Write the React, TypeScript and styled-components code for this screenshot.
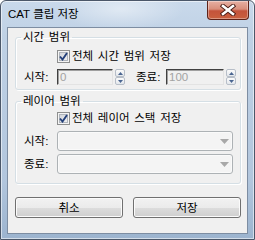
import React from 'react';
import styled, { createGlobalStyle } from 'styled-components';

// ── Global ────────────────────────────────────────────────

const GlobalStyle = createGlobalStyle`
  html, body {
    margin: 0;
    padding: 0;
    background: #ffffff;
  }
  body {
    font-family: "Liberation Sans", "Noto Sans CJK KR", sans-serif;
    font-size: 11.5px;
    color: #000;
  }
  * { box-sizing: border-box; }
`;

// ── Window frame ──────────────────────────────────────────

const Window = styled.div`
  width: 255px;
  height: 240px;
  display: flex;
  flex-direction: column;
  border: 1px solid #4b5769;
  border-radius: 6px 6px 0 0;
  background:
    radial-gradient(ellipse 90px 30px at 120px 8px, rgba(255, 255, 255, 0.45), rgba(255, 255, 255, 0) 70%),
    linear-gradient(180deg, #c9d9eb 0%, #bfd1e5 15%, #b2c6dd 75%, #9cb4cf 100%);
  box-shadow: inset 0 0 0 1px rgba(255, 255, 255, 0.55);
  overflow: hidden;
`;

const TitleBar = styled.div`
  height: 26px;
  flex: none;
  display: flex;
  align-items: flex-start;
  justify-content: space-between;
  padding: 0 5px 0 7px;
`;

const Title = styled.span`
  margin-top: 6px;
  font-size: 11.5px;
  line-height: 15px;
  color: #000;
`;

const CloseButton = styled.div`
  width: 42px;
  height: 19px;
  border: 1px solid #5e2218;
  border-top: none;
  border-radius: 0 0 4px 4px;
  background: linear-gradient(180deg, #e7b0a3 0%, #d98e7b 45%, #c4533b 55%, #c9603f 100%);
  box-shadow: inset 0 0 0 1px rgba(255, 255, 255, 0.35);
  display: flex;
  align-items: center;
  justify-content: center;
`;

const Client = styled.div`
  flex: 1;
  margin: 0 6px 5px;
  border: 1px solid #7d8da2;
  background: #f0f0f0;
  padding: 2px 6px 0 7px;
  display: flex;
  flex-direction: column;
`;

// ── Group box ─────────────────────────────────────────────

const GroupBox = styled.fieldset<{ $gap?: number }>`
  margin: ${({ $gap = 0 }) => $gap}px 0 0;
  padding: 0;
  min-width: 0;
  border: 1px solid #d5dfe5;
  border-radius: 3px;
  box-shadow: 1px 1px 0 #ffffff, inset 1px 1px 0 #ffffff;
`;

const Legend = styled.legend`
  margin-left: 5px;
  padding: 0 2px;
  line-height: 14px;
  word-spacing: 1.5px;
`;

const GroupBody = styled.div<{ $top: number; $bottom: number; $gap: number }>`
  display: flex;
  flex-direction: column;
  gap: ${({ $gap }) => $gap}px;
  padding: ${({ $top }) => $top}px 0 ${({ $bottom }) => $bottom}px 8px;
`;

// ── Checkbox ──────────────────────────────────────────────

const CheckRow = styled.label`
  display: flex;
  align-items: center;
  gap: 2px;
  margin-left: 33px;
  height: 13px;
  line-height: 13px;
  word-spacing: 1.5px;
`;

const CheckBox = styled.span`
  width: 13px;
  height: 13px;
  flex: none;
  border: 1px solid #8e8f8f;
  background: linear-gradient(135deg, #cbcfd5 0%, #f6f6f6 100%);
  box-shadow: inset 0 0 0 1px #f4f4f4, inset 0 0 0 2px #b0b5bc;
  display: flex;
  align-items: center;
  justify-content: center;
`;

// ── Fields ────────────────────────────────────────────────

const FieldRow = styled.div<{ $height: number; $pull?: number }>`
  display: flex;
  align-items: center;
  height: ${({ $height }) => $height}px;
  margin-top: ${({ $pull = 0 }) => -$pull}px;
`;

const FieldLabel = styled.span<{ $width: number; $indent?: number }>`
  width: ${({ $width }) => $width}px;
  margin-left: ${({ $indent = 0 }) => $indent}px;
  flex: none;
  line-height: 14px;
`;

const SpinInput = styled.div<{ $width: number }>`
  width: ${({ $width }) => $width}px;
  height: 16px;
  border-style: solid;
  border-width: 1px;
  border-color: #404040 #e3e3e3 #e3e3e3 #404040;
  box-shadow: inset 1px 1px 0 #a0a0a0;
  background: #f0f0f0;
  color: #a3a3a3;
  padding-left: 2px;
  line-height: 14px;
`;

const Spinner = styled.div`
  width: 10px;
  height: 16px;
  margin-left: 2px;
  display: flex;
  flex-direction: column;
`;

const SpinHalf = styled.span`
  flex: 1;
  border: 1px solid #b7bec8;
  border-radius: 2px;
  background: linear-gradient(180deg, #fbfbfb 0%, #e3e7ec 100%);
  display: flex;
  align-items: center;
  justify-content: center;
`;

const Combo = styled.div`
  width: 176px;
  height: 20px;
  border: 1px solid #adb2b5;
  border-radius: 3px;
  background: #f4f4f4;
  box-shadow: inset 0 0 0 1px #fafafa;
  display: flex;
  align-items: center;
  justify-content: flex-end;
  padding-right: 3px;
`;

// ── Buttons ───────────────────────────────────────────────

const ButtonRow = styled.div`
  display: grid;
  grid-template-columns: 1fr 1fr;
  gap: 10px;
  margin-top: 13px;
`;

const PushButton = styled.button`
  height: 21px;
  padding: 0;
  border: 1px solid #707070;
  border-radius: 3px;
  background: linear-gradient(180deg, #f2f2f2 0%, #ebebeb 50%, #dddddd 50%, #cfcfcf 100%);
  box-shadow: inset 0 0 0 1px #fbfbfb;
  font: inherit;
  color: #000;
  line-height: 14px;
`;

// ── Icons ─────────────────────────────────────────────────

const CloseX = () => (
  <svg width="16" height="12" viewBox="0 0 16 12">
    <path d="M3 2 L13 10 M13 2 L3 10" stroke="#4a1d16" strokeWidth="4.4" strokeLinecap="square" />
    <path d="M3 2 L13 10 M13 2 L3 10" stroke="#ffffff" strokeWidth="2.6" strokeLinecap="square" />
  </svg>
);

const CheckMark = () => (
  <svg width="9" height="9" viewBox="0 0 9 9">
    <path d="M1 4.5 L3.5 7.5 L8 1" fill="none" stroke="#24407a" strokeWidth="1.9" />
  </svg>
);

const SpinArrow = ({ up }: { up?: boolean }) => (
  <svg width="5" height="3" viewBox="0 0 5 3">
    <path d={up ? 'M0 3 L2.5 0 L5 3 Z' : 'M0 0 L2.5 3 L5 0 Z'} fill="#4a6590" />
  </svg>
);

const ComboArrow = () => (
  <svg width="9" height="5" viewBox="0 0 9 5">
    <path d="M0 0 L9 0 L4.5 5 Z" fill="#a8a8a8" />
  </svg>
);

// ── Parts ─────────────────────────────────────────────────

const Check: React.FC<{ label: string }> = ({ label }) => (
  <CheckRow>
    <CheckBox>
      <CheckMark />
    </CheckBox>
    {label}
  </CheckRow>
);

const Spin: React.FC<{ value: string; width: number }> = ({ value, width }) => (
  <>
    <SpinInput $width={width}>{value}</SpinInput>
    <Spinner>
      <SpinHalf>
        <SpinArrow up />
      </SpinHalf>
      <SpinHalf>
        <SpinArrow />
      </SpinHalf>
    </Spinner>
  </>
);

// ── App ───────────────────────────────────────────────────

export default function App() {
  return (
    <>
      <GlobalStyle />
      <Window>
        <TitleBar>
          <Title>CAT 클립 저장</Title>
          <CloseButton>
            <CloseX />
          </CloseButton>
        </TitleBar>
        <Client>
          <GroupBox>
            <Legend>시간 범위</Legend>
            <GroupBody $top={6} $bottom={4} $gap={6}>
              <Check label="전체 시간 범위 저장" />
              <FieldRow $height={16}>
                <FieldLabel $width={33}>시작:</FieldLabel>
                <Spin value="0" width={56} />
                <FieldLabel $width={30} $indent={11}>
                  종료:
                </FieldLabel>
                <Spin value="100" width={58} />
              </FieldRow>
            </GroupBody>
          </GroupBox>
          <GroupBox $gap={4}>
            <Legend>레이어 범위</Legend>
            <GroupBody $top={4} $bottom={9} $gap={6}>
              <Check label="전체 레이어 스택 저장" />
              <FieldRow $height={20}>
                <FieldLabel $width={33}>시작:</FieldLabel>
                <Combo>
                  <ComboArrow />
                </Combo>
              </FieldRow>
              <FieldRow $height={20} $pull={3}>
                <FieldLabel $width={33}>종료:</FieldLabel>
                <Combo>
                  <ComboArrow />
                </Combo>
              </FieldRow>
            </GroupBody>
          </GroupBox>
          <ButtonRow>
            <PushButton>취소</PushButton>
            <PushButton>저장</PushButton>
          </ButtonRow>
        </Client>
      </Window>
    </>
  );
}
